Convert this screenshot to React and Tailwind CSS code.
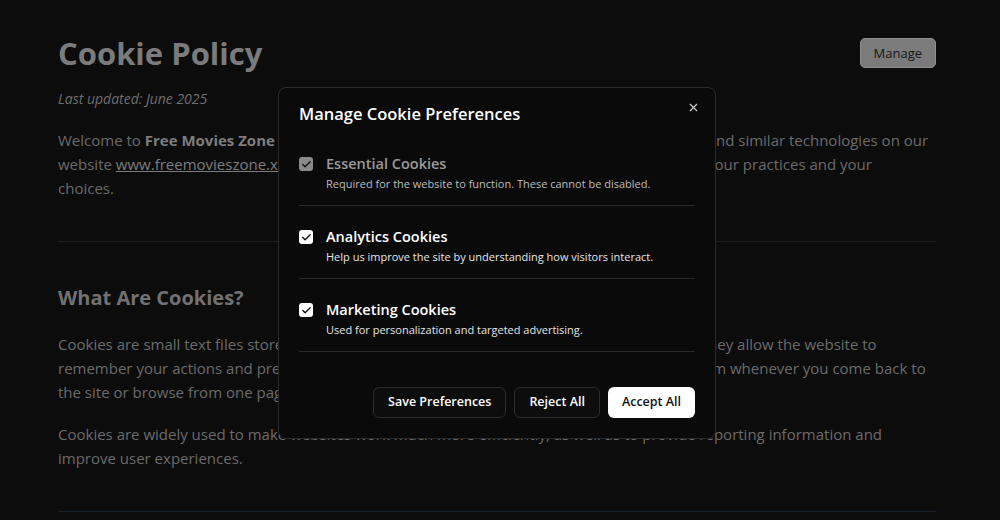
import { X, Check } from 'lucide-react';

const font = { fontFamily: '"Open Sans", "Liberation Sans", sans-serif' };

const prefs = [
  { id: 'essential', title: 'Essential Cookies', desc: 'Required for the website to function. These cannot be disabled.', locked: true },
  { id: 'analytics', title: 'Analytics Cookies', desc: 'Help us improve the site by understanding how visitors interact.' },
  { id: 'marketing', title: 'Marketing Cookies', desc: 'Used for personalization and targeted advertising.' },
];

function Box({ locked }) {
  return (
    <span
      className={
        'mt-[3px] flex h-[14px] w-[14px] shrink-0 items-center justify-center rounded-[3px] ' +
        (locked ? 'bg-[#8a8a8a]' : 'bg-white')
      }
    >
      <Check className="h-[11px] w-[11px] text-[#111]" strokeWidth={3} />
    </span>
  );
}

export default function App() {
  return (
    <div className="relative h-[520px] w-[1000px] overflow-hidden bg-[#0c0c0d]" style={font}>
      {/* page behind the dialog */}
      <div className="ml-[58px] w-[878px] pt-[34px]">
        <div className="flex items-start justify-between">
          <h1 className="text-[31px] font-bold leading-[38px] text-[#7b7b7b]">Cookie Policy</h1>
          <button className="mt-[4px] rounded-[5px] border border-[#8f8f8f] bg-[#7b7b7b] px-[13px] py-[5px] text-[13px] font-medium leading-[18px] text-[#151515]">
            Manage
          </button>
        </div>
        <p className="mt-[16px] text-[14px] italic text-[#6e6e6e]">Last updated: June 2025</p>
        <p className="mt-[19px] whitespace-nowrap text-[15px] leading-[24px] text-[#6b6b6b]">
          Welcome to <b className="font-bold text-[#7d7d7d]">Free Movies Zone</b> ("we", "us", or "our"). This policy explains how we use cookies and similar technologies on our
          <br />
          website <a className="underline text-[#7d7d7d]">www.freemovieszone.xyz</a> (the "Site"). Reading it will help you learn a little more about our practices and your
          <br />
          choices.
        </p>
        <div className="mt-[41px] h-px bg-[#1d1d21]" />
        <h2 className="mt-[42px] text-[20px] font-bold leading-[28px] text-[#717171]">What Are Cookies?</h2>
        <p className="mt-[20px] whitespace-nowrap text-[15px] leading-[24px] text-[#6b6b6b]">
          Cookies are small text files stored on a computer or mobile device when you visit a website. They allow the website to
          <br />
          remember your actions and preferences over a fixed period, so you don't have to re-enter them whenever you come back to
          <br />
          the site or browse from one page to another.
        </p>
        <p className="mt-[18px] whitespace-nowrap text-[15px] leading-[24px] text-[#6b6b6b]">
          Cookies are widely used to make websites work much more efficiently, as well as to provide reporting information and
          <br />
          improve user experiences.
        </p>
        <div className="mt-[41px] h-px bg-[#18202b]" />
      </div>

      {/* dialog */}
      <div className="absolute left-[278px] top-[87px] w-[438px] rounded-[8px] border border-[#2a2a2d] bg-[#0a0a0b] px-[20px] pb-[20px] pt-[14px]">
        <button className="absolute right-[15px] top-[13px] text-[#d4d4d4]">
          <X className="h-[13px] w-[13px]" strokeWidth={2} />
        </button>
        <h3 className="text-[16.5px] font-semibold leading-[24px] text-white">Manage Cookie Preferences</h3>
        <div className="mt-[28px]">
          {prefs.map((p) => (
            <div key={p.id} className="flex gap-[13px] border-b border-[#2a2a2d] pb-[13px] pt-[21px] first:pt-0">
              <Box locked={p.locked} />
              <div>
                <div className={'text-[14.5px] font-semibold leading-[20px] ' + (p.locked ? 'text-[#9a9a9a]' : 'text-white')}>
                  {p.title}
                </div>
                <div className={'mt-[2px] text-[11px] leading-[16px] ' + (p.locked ? 'text-[#bdbdbd]' : 'text-[#e5e5e5]')}>
                  {p.desc}
                </div>
              </div>
            </div>
          ))}
        </div>
        <div className="mt-[35px] flex justify-end gap-[8px]">
          <button className="h-[31px] rounded-[6px] border border-[#2c2c2f] bg-[#0d0d0e] px-[14px] text-[12.5px] font-semibold text-white">
            Save Preferences
          </button>
          <button className="h-[31px] rounded-[6px] border border-[#2c2c2f] bg-[#0d0d0e] px-[14px] text-[12.5px] font-semibold text-white">
            Reject All
          </button>
          <button className="h-[31px] rounded-[6px] bg-white px-[14px] text-[12.5px] font-semibold text-[#111]">
            Accept All
          </button>
        </div>
      </div>
    </div>
  );
}
